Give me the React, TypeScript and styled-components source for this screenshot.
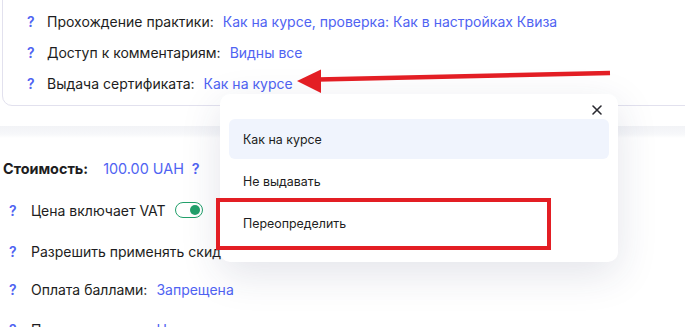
import React from "react";
import styled, { createGlobalStyle } from "styled-components";

const GlobalStyle = createGlobalStyle`
  html, body {
    margin: 0;
    padding: 0;
    background: #ffffff;
    overflow: hidden;
  }
  body {
    font-family: Inter, "Noto Sans", sans-serif;
    color: #1d1d21;
  }
`;

const Page = styled.div`
  position: relative;
  width: 685px;
  height: 327px;
  overflow: hidden;
  background: #ffffff;
`;

const TopCard = styled.div`
  margin: -11px -20px 0 2px;
  padding: 16px 0 6px 0;
  border: 1px solid #e2e1ee;
  border-radius: 10px;
`;

const Row = styled.div<{ $h?: number; $indent?: number }>`
  display: flex;
  align-items: center;
  height: ${(p) => p.$h ?? 31}px;
  padding-left: ${(p) => p.$indent ?? 24}px;
  font-size: 14px;
  white-space: nowrap;
`;

const Hint = styled.span<{ $w?: number }>`
  color: #4f63f2;
  font-weight: 600;
  width: ${(p) => p.$w ?? 20}px;
`;

const Label = styled.span`
  color: #1d1d21;
  margin-right: 9px;
`;

const Value = styled.span`
  color: #4f63f2;
`;

const Divider = styled.div`
  height: 12px;
  margin-top: 20px;
  background: linear-gradient(#f2f3f6, #f7f8fa 70%, #ffffff);
`;

const Section = styled.div`
  padding-top: 15px;
`;

const PriceRow = styled.div`
  display: flex;
  align-items: center;
  height: 30px;
  padding-left: 3px;
  font-size: 14.4px;
  white-space: nowrap;
`;

const PriceLabel = styled.span`
  font-weight: 700;
  margin-right: 15px;
`;

const PriceValue = styled.span`
  color: #4f63f2;
  margin-right: 8px;
`;

const Toggle = styled.span`
  display: inline-flex;
  align-items: center;
  justify-content: flex-end;
  box-sizing: border-box;
  width: 28px;
  height: 16px;
  margin-left: 9px;
  padding: 0 2px;
  border: 1.5px solid #22a06b;
  border-radius: 8px;
  &::after {
    content: "";
    width: 10px;
    height: 10px;
    border-radius: 50%;
    background: #22a06b;
  }
`;

const Popup = styled.div`
  position: absolute;
  left: 220px;
  top: 94px;
  width: 398px;
  height: 168px;
  box-sizing: border-box;
  padding: 25px 9px 0 9px;
  background: #ffffff;
  border-radius: 10px;
  box-shadow: 0 12px 40px rgba(40, 50, 90, 0.13);
`;

const Close = styled.button`
  position: absolute;
  right: 14px;
  top: 9px;
  width: 14px;
  height: 14px;
  padding: 0;
  border: none;
  background: none;
  display: flex;
`;

const Option = styled.div<{ $active?: boolean }>`
  display: flex;
  align-items: center;
  height: 40px;
  margin-bottom: 2px;
  padding-left: 14px;
  border-radius: 6px;
  font-size: 12.4px;
  color: #1d1d21;
  background: ${(p) => (p.$active ? "#f0f4fd" : "transparent")};
`;

const Highlight = styled.div`
  position: absolute;
  left: 216px;
  top: 198px;
  width: 335px;
  height: 52px;
  box-sizing: border-box;
  border: 4px solid #e31e24;
  pointer-events: none;
`;

const Arrow = styled.svg`
  position: absolute;
  left: 0;
  top: 0;
  pointer-events: none;
`;

const rows = [
  { label: "Прохождение практики:", value: "Как на курсе, проверка: Как в настройках Квиза" },
  { label: "Доступ к комментариям:", value: "Видны все" },
  { label: "Выдача сертификата:", value: "Как на курсе" },
];

const options = ["Как на курсе", "Не выдавать", "Переопределить"];

export default function App() {
  return (
    <Page>
      <GlobalStyle />
      <TopCard>
        {rows.map((r) => (
          <Row key={r.label}>
            <Hint>?</Hint>
            <Label>{r.label}</Label>
            <Value>{r.value}</Value>
          </Row>
        ))}
      </TopCard>
      <Divider />
      <Section>
        <PriceRow>
          <PriceLabel>Стоимость:</PriceLabel>
          <PriceValue>100.00 UAH</PriceValue>
          <Hint>?</Hint>
        </PriceRow>
        <Row $h={42} $indent={9} style={{ marginTop: 6 }}>
          <Hint $w={22}>?</Hint>
          <Label style={{ marginRight: 0 }}>Цена включает VAT</Label>
          <Toggle />
        </Row>
        <Row $h={40} $indent={9}>
          <Hint $w={22}>?</Hint>
          <Label>Разрешить применять скидки</Label>
        </Row>
        <Row $h={36} $indent={9}>
          <Hint $w={22}>?</Hint>
          <Label>Оплата баллами:</Label>
          <Value>Запрещена</Value>
        </Row>
        <Row $h={44} $indent={9}>
          <Hint $w={22}>?</Hint>
          <Label>Период доступа:</Label>
          <Value>Неограничен</Value>
        </Row>
      </Section>

      <Popup>
        <Close aria-label="close">
          <svg width="14" height="14" viewBox="0 0 14 14">
            <path d="M3 3 L11 11 M11 3 L3 11" stroke="#2a2a30" strokeWidth="1.6" strokeLinecap="round" />
          </svg>
        </Close>
        {options.map((o, i) => (
          <Option key={o} $active={i === 0}>
            {o}
          </Option>
        ))}
      </Popup>
      <Highlight />

      <Arrow width="685" height="327" viewBox="0 0 685 327">
        <path d="M318 79.5 L610 73" stroke="#e31e24" strokeWidth="4.5" />
        <path d="M297 81 L321 69.5 L321 93 Z" fill="#e31e24" />
      </Arrow>
    </Page>
  );
}
